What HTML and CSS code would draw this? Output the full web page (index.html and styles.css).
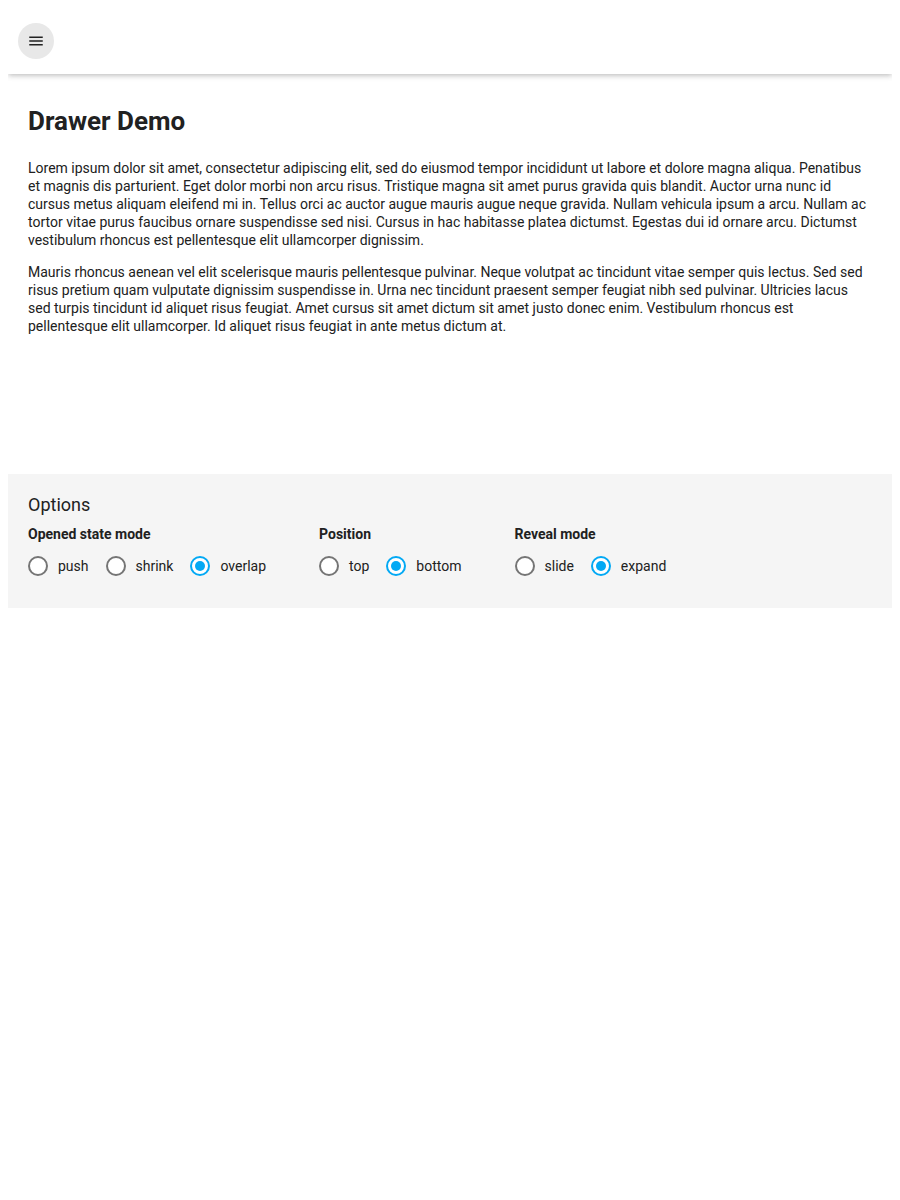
FILE: index.html
```html
<!DOCTYPE html>
<html lang="en">
<head>
<meta charset="utf-8">
<title>Drawer Demo</title>
<link rel="stylesheet" href="styles.css">
</head>
<body>
<header class="app-bar">
  <button class="menu-btn" aria-label="Menu">
    <svg width="18" height="18" viewBox="0 0 24 24"><path d="M3 18h18v-2H3v2zm0-5h18v-2H3v2zm0-7v2h18V6H3z" fill="#212121"/></svg>
  </button>
</header>
<main class="content">
  <h1 class="title">Drawer Demo</h1>
  <p class="text">Lorem ipsum dolor sit amet, consectetur adipiscing elit, sed do eiusmod tempor incididunt ut labore et dolore magna aliqua. Penatibus et magnis dis parturient. Eget dolor morbi non arcu risus. Tristique magna sit amet purus gravida quis blandit. Auctor urna nunc id cursus metus aliquam eleifend mi in. Tellus orci ac auctor augue mauris augue neque gravida. Nullam vehicula ipsum a arcu. Nullam ac tortor vitae purus faucibus ornare suspendisse sed nisi. Cursus in hac habitasse platea dictumst. Egestas dui id ornare arcu. Dictumst vestibulum rhoncus est pellentesque elit ullamcorper dignissim.</p>
  <p class="text">Mauris rhoncus aenean vel elit scelerisque mauris pellentesque pulvinar. Neque volutpat ac tincidunt vitae semper quis lectus. Sed sed risus pretium quam vulputate dignissim suspendisse in. Urna nec tincidunt praesent semper feugiat nibh sed pulvinar. Ultricies lacus sed turpis tincidunt id aliquet risus feugiat. Amet cursus sit amet dictum sit amet justo donec enim. Vestibulum rhoncus est pellentesque elit ullamcorper. Id aliquet risus feugiat in ante metus dictum at.</p>
</main>
<section class="options">
  <h2 class="options-title">Options</h2>
  <div class="groups">
    <div class="group">
      <div class="group-label">Opened state mode</div>
      <div class="radios">
        <label class="radio"><span class="dot"></span>push</label>
        <label class="radio"><span class="dot"></span>shrink</label>
        <label class="radio checked"><span class="dot"></span>overlap</label>
      </div>
    </div>
    <div class="group">
      <div class="group-label">Position</div>
      <div class="radios">
        <label class="radio"><span class="dot"></span>top</label>
        <label class="radio checked"><span class="dot"></span>bottom</label>
      </div>
    </div>
    <div class="group">
      <div class="group-label">Reveal mode</div>
      <div class="radios">
        <label class="radio"><span class="dot"></span>slide</label>
        <label class="radio checked"><span class="dot"></span>expand</label>
      </div>
    </div>
  </div>
</section>
</body>
</html>
```
FILE: styles.css
```css
body {
  margin: 8px;
  font-family: Roboto, "Liberation Sans", sans-serif;
  color: #212121;
  background: #fff;
}
.app-bar {
  height: 66px;
  display: flex;
  align-items: center;
  padding: 0 10px;
  background: #fff;
  box-shadow: 0 2px 4px -1px rgba(0,0,0,0.12), 0 3px 5px 0 rgba(0,0,0,0.08), 0 1px 8px 0 rgba(0,0,0,0.08);
}
.menu-btn {
  width: 36px;
  height: 36px;
  border: none;
  border-radius: 50%;
  background: #e8e8e8;
  display: flex;
  align-items: center;
  justify-content: center;
  padding: 0;
}
.content {
  padding: 32px 20px 0;
  height: 368px;
}
.title {
  margin: 0 0 23px;
  font-size: 26px;
  line-height: 30px;
  font-weight: 700;
}
.text {
  margin: 0 0 14px;
  font-size: 14px;
  line-height: 18px;
}
.options {
  background: #f5f5f5;
  padding: 20px 20px 32px;
}
.options-title {
  margin: 0 0 9px;
  font-size: 18px;
  line-height: 22px;
  font-weight: 400;
}
.groups {
  display: flex;
  gap: 53px;
}
.group-label {
  font-size: 14px;
  font-weight: 700;
  line-height: 18px;
}
.radios {
  display: flex;
  gap: 17px;
  margin-top: 13px;
}
.radio {
  display: flex;
  align-items: center;
  gap: 10px;
  font-size: 14px;
  line-height: 20px;
}
.dot {
  width: 20px;
  height: 20px;
  box-sizing: border-box;
  border: 2px solid #757575;
  border-radius: 50%;
  background: #fff;
  display: flex;
  align-items: center;
  justify-content: center;
}
.checked .dot {
  border-color: #03a9f4;
}
.checked .dot::after {
  content: "";
  width: 10px;
  height: 10px;
  border-radius: 50%;
  background: #03a9f4;
}
```
